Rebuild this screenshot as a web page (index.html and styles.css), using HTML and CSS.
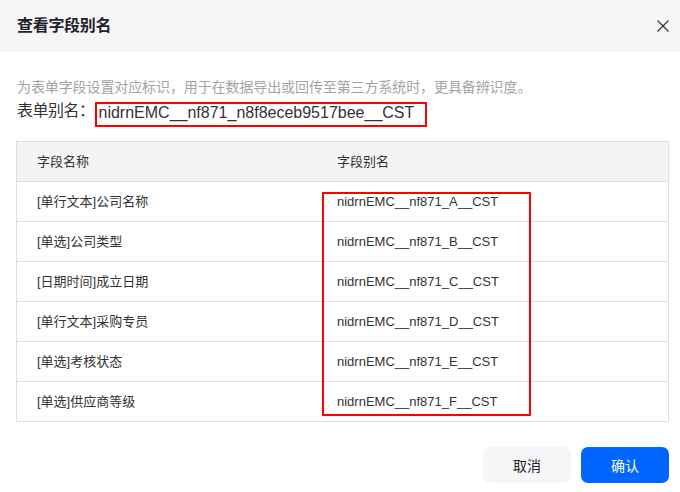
FILE: index.html
```html
<!DOCTYPE html>
<html lang="zh-CN">
<head>
<meta charset="utf-8">
<title>查看字段别名</title>
<link rel="stylesheet" href="styles.css">
</head>
<body>
<div class="dialog">
  <div class="header">
    <div class="title">查看字段别名</div>
    <svg class="close" width="12" height="12" viewBox="0 0 12 12" aria-hidden="true">
      <path d="M0.5 0.5 L11.5 11.5 M11.5 0.5 L0.5 11.5" stroke="#333" stroke-width="1.2" fill="none"/>
    </svg>
  </div>
  <div class="content">
    <div class="desc">为表单字段设置对应标识，用于在数据导出或回传至第三方系统时，更具备辨识度。</div>
    <div class="alias-row">
      <span class="alias-label">表单别名：</span>
      <span class="alias-value">nidrnEMC__nf871_n8f8eceb9517bee__CST</span>
    </div>
    <div class="table">
      <div class="row head"><div class="cell">字段名称</div><div class="cell">字段别名</div></div>
      <div class="row"><div class="cell">[单行文本]公司名称</div><div class="cell">nidrnEMC__nf871_A__CST</div></div>
      <div class="row"><div class="cell">[单选]公司类型</div><div class="cell">nidrnEMC__nf871_B__CST</div></div>
      <div class="row"><div class="cell">[日期时间]成立日期</div><div class="cell">nidrnEMC__nf871_C__CST</div></div>
      <div class="row"><div class="cell">[单行文本]采购专员</div><div class="cell">nidrnEMC__nf871_D__CST</div></div>
      <div class="row"><div class="cell">[单选]考核状态</div><div class="cell">nidrnEMC__nf871_E__CST</div></div>
      <div class="row"><div class="cell">[单选]供应商等级</div><div class="cell">nidrnEMC__nf871_F__CST</div></div>
      <div class="mark"></div>
    </div>
    <div class="footer">
      <button class="btn btn-cancel">取消</button>
      <button class="btn btn-ok">确认</button>
    </div>
  </div>
</div>
</body>
</html>
```
FILE: styles.css
```css
* { box-sizing: border-box; }
html, body { margin: 0; padding: 0; background: #fff; }
body {
  font-family: "Liberation Sans", "Noto Sans CJK SC", sans-serif;
  color: #333;
}
.dialog {
  width: 680px;
  height: 492px;
  background: #fff;
}
.header {
  height: 52px;
  background: #f5f6f7;
  display: flex;
  align-items: center;
  justify-content: space-between;
  padding: 0 11px 0 17px;
}
.title {
  font-size: 16px;
  font-weight: 700;
  color: #1f2329;
  letter-spacing: -0.3px;
  line-height: 22px;
}
.close { display: block; }
.content {
  padding: 25px 11px 0 16px;
}
.desc {
  font-size: 14px;
  line-height: 20px;
  color: #a3a3a3;
  letter-spacing: -0.1px;
  padding-left: 1px;
  margin-bottom: 3px;
  white-space: nowrap;
}
.alias-row {
  display: flex;
  align-items: flex-start;
  padding-left: 1px;
}
.alias-label {
  flex: 0 0 77px;
  font-size: 16px;
  line-height: 22px;
  color: #333;
  letter-spacing: -0.5px;
  white-space: nowrap;
}
.alias-value {
  flex: 0 0 332px;
  margin-top: 2px;
  height: 25px;
  border: 2px solid #ff0000;
  padding: 0 0 0 2px;
  font-size: 16px;
  line-height: 17px;
  color: #333;
  white-space: nowrap;
}
.table {
  position: relative;
  margin-top: 14px;
  border: 1px solid #dedede;
  width: 653px;
}
.row {
  display: grid;
  grid-template-columns: 300px 1fr;
  height: 40px;
  align-items: center;
  border-top: 1px solid #dedede;
  font-size: 13px;
  color: #333;
}
.row.head {
  border-top: none;
  height: 39px;
  background: #f4f4f4;
}
.cell {
  padding-left: 20px;
  line-height: 18px;
  white-space: nowrap;
}
.mark {
  position: absolute;
  left: 305px;
  top: 50px;
  width: 209px;
  height: 224px;
  border: 2px solid #ff0000;
  pointer-events: none;
}
.footer {
  display: flex;
  justify-content: flex-end;
  gap: 10px;
  margin-top: 25px;
}
.btn {
  width: 88px;
  height: 36px;
  border: none;
  border-radius: 7px;
  font-family: "Liberation Sans", "Noto Sans CJK SC", sans-serif;
  font-size: 14px;
  cursor: pointer;
  padding: 0;
}
.btn-cancel {
  background: #f5f6f7;
  color: #1f2329;
}
.btn-ok {
  background: #0066ff;
  color: #fff;
}
```
